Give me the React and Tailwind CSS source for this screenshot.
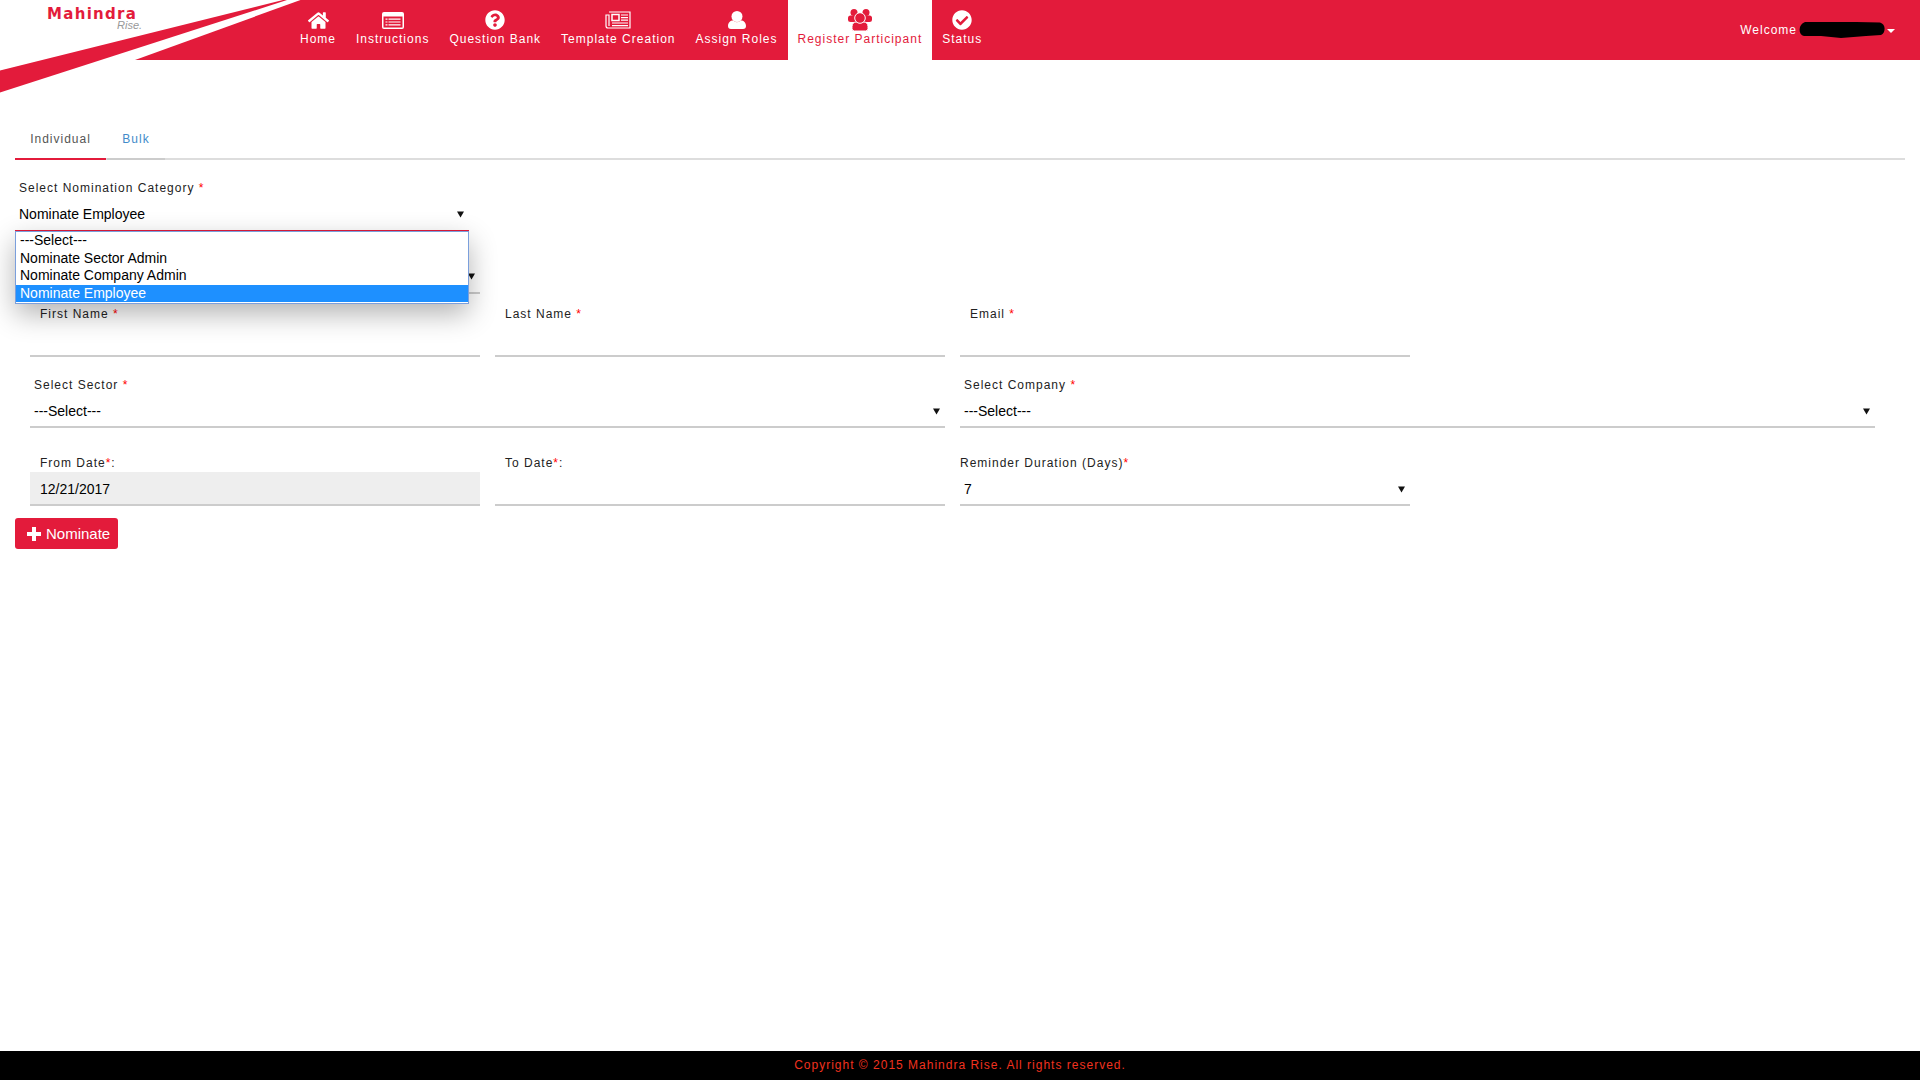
import React from "react";
import { FaHome, FaQuestionCircle, FaCheckCircle } from "react-icons/fa";

// font-awesome 4 shapes that the icon package no longer has
const ListAltIcon = () => (
  <svg width="22" height="17" viewBox="0 0 22 17">
    <rect width="22" height="17" rx="2" fill="#fff" />
    <rect x="1.5" y="4.5" width="19" height="11" fill="#e31b3b" />
    <path d="M3.5 6.5h2v1.2h-2zM3.5 9.4h2v1.2h-2zM3.5 12.3h2v1.2h-2zM6.5 6.5h12v1.2h-12zM6.5 9.4h12v1.2h-12zM6.5 12.3h12v1.2h-12z" fill="#fff" />
  </svg>
);

const NewspaperIcon = () => (
  <svg width="26" height="18" viewBox="0 0 26 18" fill="none" stroke="#fff" strokeWidth="1.2">
    <path d="M4 1H25V17H3Q1 17 1 15V4H4V15" />
    <rect x="7" y="3.5" width="7" height="6" strokeWidth="1.5" />
    <path d="M16 4H23M16 6.6H23M16 9.2H23M7 12H23M7 14.6H23" />
  </svg>
);

const UserIcon = () => (
  <svg width="18" height="18" viewBox="0 0 18 18" fill="#fff">
    <circle cx="9" cy="5.5" r="5.5" />
    <path d="M0 15C0 11.5 2.5 9.5 5 9.5Q9 13 13 9.5C15.5 9.5 18 11.5 18 15Q18 18 15 18H3Q0 18 0 15Z" />
  </svg>
);

const UsersIcon = () => (
  <svg width="24" height="22" viewBox="0 0 24 22" fill="#e31b3b">
    <circle cx="6" cy="3.5" r="3.5" />
    <circle cx="18" cy="3.5" r="3.5" />
    <path d="M0 9Q0 6.5 2.5 6.5H21.5Q24 6.5 24 9V11Q24 13 21.5 13H2.5Q0 13 0 11Z" />
    <path d="M4 17.5C4 14.5 6 13 8 13H16C18 13 20 14.5 20 17.5V19.5Q20 22 17.5 22H6.5Q4 22 4 19.5Z" stroke="#fff" strokeWidth="1" />
    <circle cx="12" cy="9" r="5.3" stroke="#fff" strokeWidth="1" />
  </svg>
);

const PlusIcon = () => (
  <svg width="14" height="14" viewBox="0 0 14 14" fill="#fff">
    <path d="M5 0H9V5H14V9H9V14H5V9H0V5H5Z" />
  </svg>
);

const navItems = [
  { label: "Home", icon: <FaHome size={21} /> },
  { label: "Instructions", icon: <ListAltIcon /> },
  { label: "Question Bank", icon: <FaQuestionCircle size={20} /> },
  { label: "Template Creation", icon: <NewspaperIcon /> },
  { label: "Assign Roles", icon: <UserIcon /> },
  { label: "Register Participant", icon: <UsersIcon />, active: true },
  { label: "Status", icon: <FaCheckCircle size={20} /> },
];

const options = ["---Select---", "Nominate Sector Admin", "Nominate Company Admin", "Nominate Employee"];

const Required = () => <span className="text-[#ff0000]">*</span>;

const FieldLabel = ({ children, className = "" }) => (
  <div className={`h-[17px] text-[12px] leading-[17px] tracking-[1px] text-[#222] ${className}`}>{children}</div>
);

const Arrow = ({ className = "" }) => (
  <svg width="7" height="7" viewBox="0 0 7 7" className={className}>
    <path d="M0 0.5H7L3.5 6.5Z" fill="#111" />
  </svg>
);

const SelectBox = ({ value, borderClass = "border-[#ccc]", heightClass = "h-[34px]", paddingClass = "pt-[2px]" }) => (
  <div className={`flex items-center justify-between border-b-2 pl-1 pr-1 text-[14px] text-black ${paddingClass} ${heightClass} ${borderClass}`}>
    <span>{value}</span>
    <Arrow className="mr-[1px]" />
  </div>
);

const TextBox = ({ value, disabled }) => (
  <div className={`flex h-[34px] items-center border-b-2 border-[#ccc] px-[10px] pt-[2px] text-[14px] text-black ${disabled ? "bg-[#eee]" : ""}`}>
    {value}
  </div>
);

const Logo = () => (
  <div className="absolute left-0 top-0 h-[100px] w-[302px] tracking-normal">
    <svg width="302" height="100" viewBox="0 0 302 100" className="absolute left-0 top-0">
      <path d="M0 0H300.5L135 60H0Z" fill="#fff" />
      <path d="M0 70.5L283 0H287L0 92.5Z" fill="#e31b3b" />
    </svg>
    <span className="absolute left-[47px] top-[9px] font-['DejaVu_Sans'] text-[15px] font-bold leading-[11px] tracking-[1.3px] text-[#e31b3b]">
      Mahindra
    </span>
    <span className="absolute left-[117px] top-[20px] font-['Liberation_Sans'] text-[11px] italic leading-[10px] text-[#999]">
      Rise.
    </span>
  </div>
);

const Header = () => (
  <header className="relative flex h-[60px] bg-[#e31b3b] pl-[290px] text-[12px] tracking-[1px] text-white">
    <Logo />
    {navItems.map(({ label, icon, active }) => (
      <div
        key={label}
        className={`relative flex flex-col items-center px-[10px] pt-[10px] ${active ? "bg-white text-[#e31b3b]" : ""}`}
      >
        <div className="flex h-[20px] items-center">{icon}</div>
        <span className="mt-[1px] leading-[16px]">{label}</span>
      </div>
    ))}
    <div className="ml-auto flex items-center pr-[25px]">
      <span>Welcome</span>
      <svg width="90" height="18" viewBox="0 0 90 18" className="-ml-[1px]">
        <path d="M9 1H60L84 1.5C90 3 90 12 85 14L70 15L45 17L25 15L8 15C2 14 2 3 9 1Z" fill="#000" />
      </svg>
      <svg width="8" height="4" viewBox="0 0 8 4" className="ml-[1px] mt-[2px]">
        <path d="M0 0H8L4 4Z" fill="#fff" />
      </svg>
    </div>
  </header>
);

const Tabs = () => (
  <div className="mx-[15px] mt-[65px] flex h-[35px] w-[1890px] border-b-2 border-[#ddd] text-[12px] tracking-[1px]">
    <div className="-mb-[2px] flex w-[91px] items-center justify-center border-b-2 border-[#e31b3b] pb-[6px] text-[#555]">Individual</div>
    <div className="-mb-[2px] ml-[1px] flex w-[58px] items-center justify-center border-b-2 border-[#ccc] pb-[6px] text-[#428bca]">Bulk</div>
  </div>
);

const CategoryField = () => (
  <div className="relative ml-[15px] w-[454px] pt-[20px]">
    <FieldLabel className="pl-1">
      Select Nomination Category <Required />
    </FieldLabel>
    {/* one pixel of the red focus line shows above the open list */}
    <SelectBox value="Nominate Employee" heightClass="h-[35px]" paddingClass="pt-[1px]" borderClass="border-[#e31b3b]" />
    <div className="absolute left-0 right-0 top-[71px] z-10 border border-[#7b9fdc] bg-white pb-[1px] text-[14px] leading-[17px] text-black shadow-[0_10px_28px_rgba(0,0,0,0.3)]">
      {options.map((option) => (
        <div
          key={option}
          className={`h-[17.6px] pl-1 ${option === "Nominate Employee" ? "bg-[#1e90ff] text-white" : ""}`}
        >
          {option}
        </div>
      ))}
    </div>
  </div>
);

const App = () => (
  <div className="flex min-h-screen flex-col bg-white font-['Liberation_Sans',Arial,sans-serif]">
    <Header />
    <main className="flex-1">
      <Tabs />
      <CategoryField />

      <div className="ml-[30px] mt-[27px] w-[450px]">
        <SelectBox value="" heightClass="h-[35px]" />
      </div>

      <div className="ml-[30px] mt-[12px] grid grid-cols-[450px_450px_450px] gap-x-[15px]">
        <div>
          <FieldLabel className="pl-[10px]">First Name <Required /></FieldLabel>
          <TextBox />
        </div>
        <div>
          <FieldLabel className="pl-[10px]">Last Name <Required /></FieldLabel>
          <TextBox />
        </div>
        <div>
          <FieldLabel className="pl-[10px]">Email <Required /></FieldLabel>
          <TextBox />
        </div>
      </div>

      <div className="ml-[30px] mt-[20px] grid grid-cols-[915px_915px] gap-x-[15px]">
        <div>
          <FieldLabel className="pl-1">Select Sector <Required /></FieldLabel>
          <SelectBox value="---Select---" />
        </div>
        <div>
          <FieldLabel className="pl-1">Select Company <Required /></FieldLabel>
          <SelectBox value="---Select---" />
        </div>
      </div>

      <div className="ml-[30px] mt-[27px] grid grid-cols-[450px_450px_450px] gap-x-[15px]">
        <div>
          <FieldLabel className="pl-[10px]">From Date<Required />:</FieldLabel>
          <TextBox value="12/21/2017" disabled />
        </div>
        <div>
          <FieldLabel className="pl-[10px]">To Date<Required />:</FieldLabel>
          <TextBox />
        </div>
        <div>
          <FieldLabel>Reminder Duration (Days)<Required /></FieldLabel>
          <SelectBox value="7" />
        </div>
      </div>

      <button className="ml-[15px] mt-[12px] flex h-[31px] w-[103px] items-center rounded-[3px] bg-[#e31b3b] pl-[12px] pt-[1px] text-[15px] text-white">
        <PlusIcon />
        <span className="ml-[5px]">Nominate</span>
      </button>
    </main>
    <footer className="flex h-[29px] items-center justify-center bg-black pb-[2px] text-[12px] tracking-[1px] text-[#f0321f]">
      Copyright © 2015 Mahindra Rise. All rights reserved.
    </footer>
  </div>
);

export default App;
